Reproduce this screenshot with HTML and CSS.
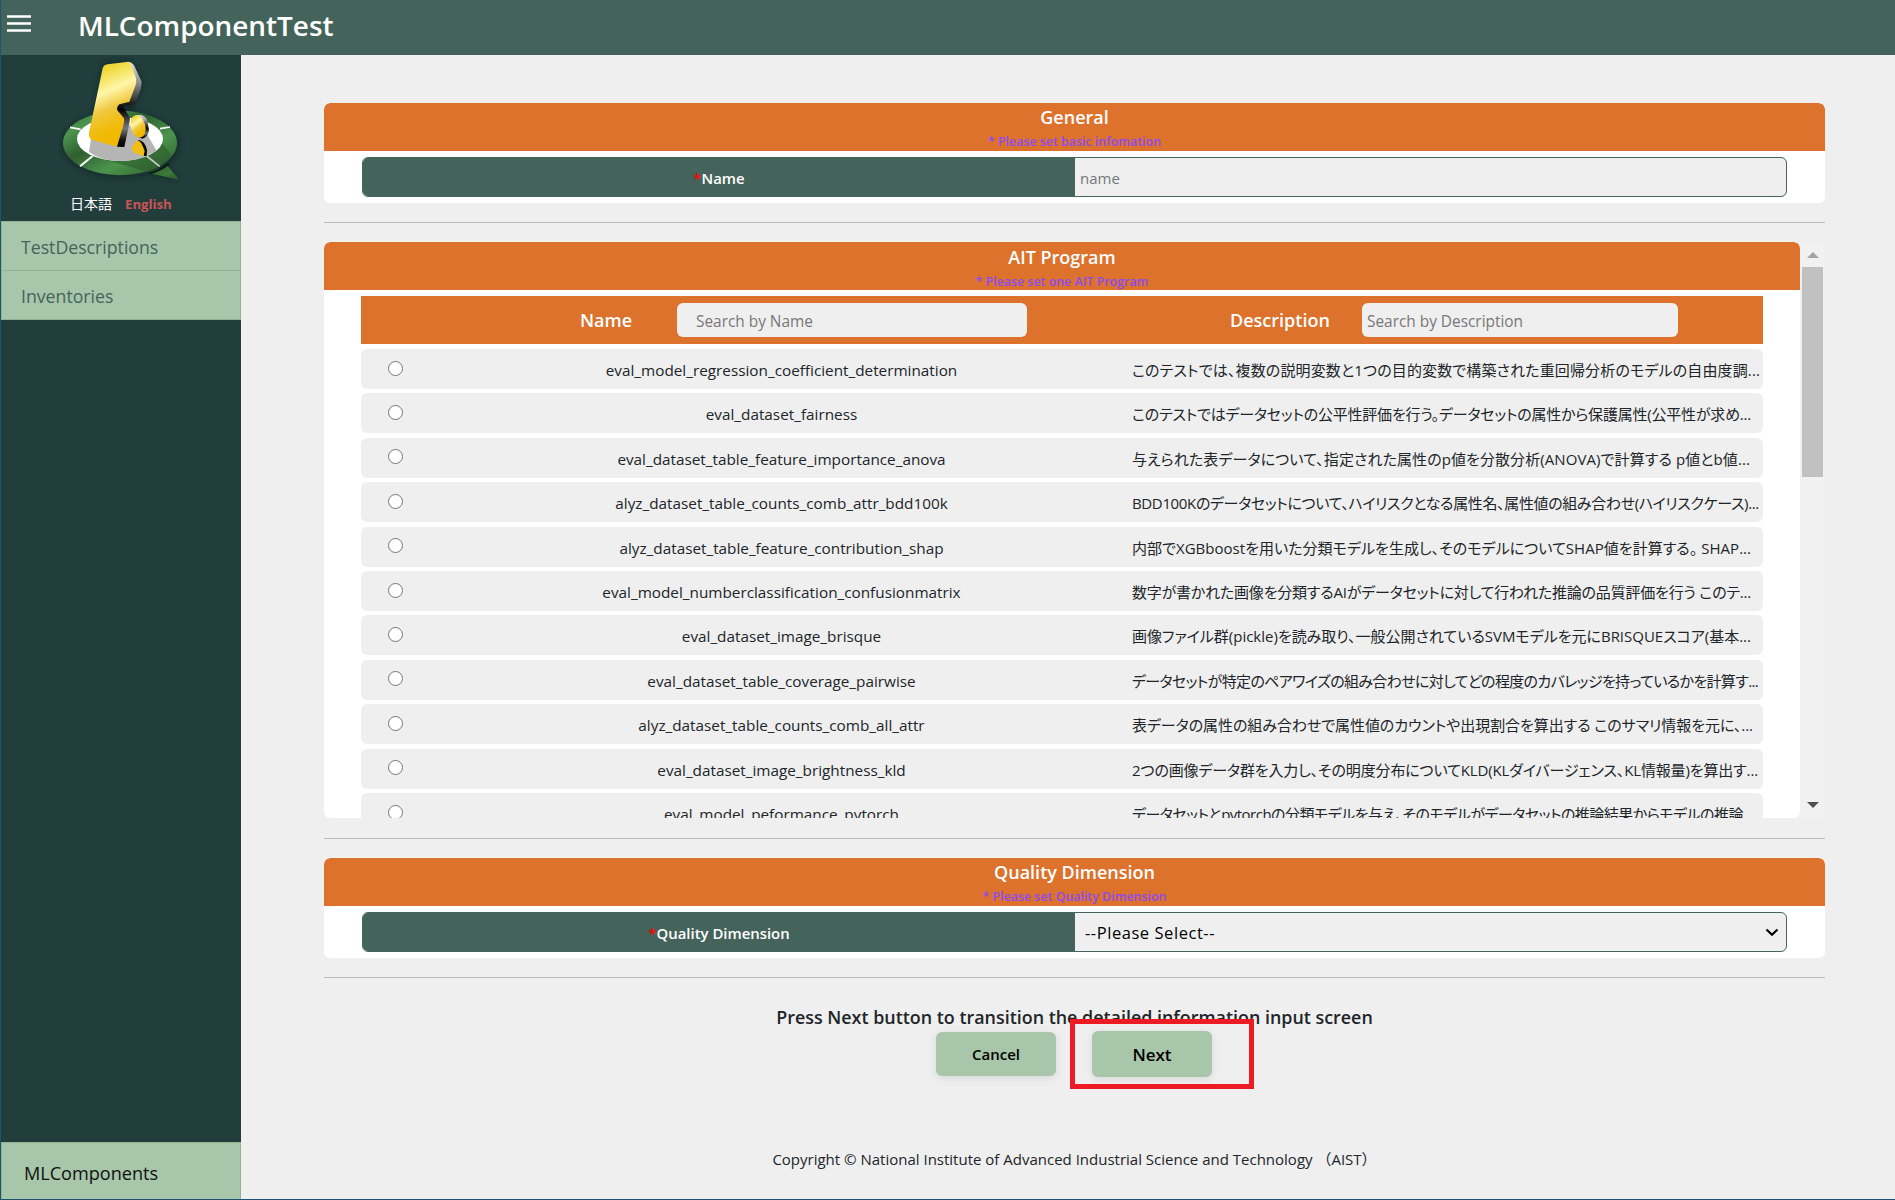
FILE: index.html
```
<!DOCTYPE html>
<html lang="en">
<head>
<meta charset="utf-8">
<title>MLComponentTest</title>
<link rel="stylesheet" href="styles.css">
</head>
<body>
<div class="app">
  <header class="topbar">
    <svg class="burger" width="24" height="18" viewBox="0 0 24 18"><path d="M0 1.5h24M0 8.5h24M0 15.5h24" stroke="#fff" stroke-width="2.6"/></svg>
    <h1>MLComponentTest</h1>
  </header>
  <div class="body">
    <aside class="sidebar">
      <svg class="logo" width="128" height="130" viewBox="24 15 384 390">
        <defs>
          <linearGradient id="gold" x1="0" y1="0" x2="0.25" y2="1"><stop offset="0" stop-color="#ecd02c"/><stop offset=".18" stop-color="#f0d93c"/><stop offset=".42" stop-color="#fff6a8"/><stop offset=".62" stop-color="#f0c840"/><stop offset=".85" stop-color="#f2bb08"/><stop offset="1" stop-color="#f0b800"/></linearGradient>
          <linearGradient id="edge" x1="0" y1="0" x2="0" y2="1"><stop offset="0" stop-color="#e4e4e4"/><stop offset=".25" stop-color="#8c8c8c"/><stop offset=".45" stop-color="#333"/><stop offset=".56" stop-color="#000"/><stop offset=".78" stop-color="#777"/><stop offset=".92" stop-color="#111"/><stop offset="1" stop-color="#000"/></linearGradient>
          <linearGradient id="ring" x1="0" y1="0" x2="1" y2="1"><stop offset="0" stop-color="#2c6a34"/><stop offset=".2" stop-color="#4e944f"/><stop offset=".4" stop-color="#2f5f30"/><stop offset=".65" stop-color="#4b944c"/><stop offset="1" stop-color="#2b5429"/></linearGradient>
          <linearGradient id="tail" x1="0" y1="0" x2="1" y2="1"><stop offset="0" stop-color="#2d5a2c"/><stop offset=".6" stop-color="#3c7a3a"/><stop offset="1" stop-color="#2a5228"/></linearGradient>
          <filter id="soft" x="-20%" y="-20%" width="140%" height="140%"><feGaussianBlur stdDeviation="9"/></filter>
        </defs>
        <g filter="url(#soft)" fill="#0c1d1c" opacity=".6"><ellipse cx="212" cy="284" rx="174" ry="98"/><path d="M162 40L240 32 278 100 250 180 170 280 115 270Z"/><path d="M300 370L345 340 388 392Z"/></g>
        <ellipse cx="210" cy="279" rx="171" ry="97" fill="url(#ring)"/>
        <path d="M120 315L310 371 366 318 328 268Z" fill="#2b592b" opacity=".55"/>
        <ellipse cx="210" cy="267" rx="129" ry="66" fill="#fff"/>
        <path d="M123 268L117 306Q155 333 210 333 270 333 320 302L280 235 200 220Z" fill="#b5b5b5"/>
        <path d="M60 232L92 238M330 236L360 231" stroke="#fff" stroke-width="5"/>
        <path d="M128 318L90 349" stroke="#fff" stroke-width="6"/><path d="M290 318L329 349" stroke="#ccc" stroke-width="5"/>
        <path d="M298 370Q330 362 350 344L388 389Z" fill="url(#tail)"/>
        <path d="M298 370Q335 362 356 341" fill="none" stroke="#0b1714" stroke-width="5"/>
        <path d="M232 35Q246 36 252 46L275 95 273 115 256 162 222 167 220 172 240 204 238 220 223 291 201 290 180 100Z" fill="url(#edge)"/>
        <path d="M173 43L230 36Q240 36 244 45L258 85Q260 100 256 108L238 155 208 163Q199 171 202 181L222 205Q224 213 221 222L201 290 126 269Q115 264 117 248L158 55Q161 45 173 43Z" fill="url(#gold)"/>
        <path d="M256 196Q284 190 292 212L297 240Q293 264 276 266L255 255Z" fill="url(#edge)"/>
        <ellipse cx="264" cy="229" rx="22" ry="34" transform="rotate(-15 264 229)" fill="url(#gold)"/>
        <path d="M264 270Q285 272 291 300L290 318 281 318Z" fill="#080808"/>
        <path d="M256 275Q267 267 275 281L284 302 281 318 254 309Q244 302 246 291Z" fill="#f2be14"/>
      </svg>
      <div class="lang"><span class="ja">日本語</span><span class="en">English</span></div>
      <nav class="menu"><a>TestDescriptions</a><a>Inventories</a></nav>
      <a class="bottom-link">MLComponents</a>
    </aside>
    <main class="content">
      <section class="card">
        <div class="card-head"><h2>General</h2><p>* Please set basic infomation</p></div>
        <div class="field"><label><i>*</i>Name</label><div class="control placeholder">name</div></div>
      </section>
      <hr>
      <section class="program">
        <div class="program-list">
          <div class="card-head"><h2>AIT Program</h2><p>* Please set one AIT Program</p></div>
          <div class="table-head">
            <b class="col-name">Name</b><div class="search by-name">Search by Name</div>
            <b class="col-desc">Description</b><div class="search by-desc">Search by Description</div>
          </div>
          <div class="rows">
            <div class="row"><span class="radio"></span><span class="name">eval_model_regression_coefficient_determination</span><span class="desc" style="letter-spacing:.135px">このテストでは、複数の説明変数と1つの目的変数で構築された重回帰分析のモデルの自由度調...</span></div>
            <div class="row"><span class="radio"></span><span class="name">eval_dataset_fairness</span><span class="desc" style="letter-spacing:-.215px">このテストではデータセットの公平性評価を行う。データセットの属性から保護属性(公平性が求め...</span></div>
            <div class="row"><span class="radio"></span><span class="name">eval_dataset_table_feature_importance_anova</span><span class="desc" style="letter-spacing:.086px">与えられた表データについて、指定された属性のp値を分散分析(ANOVA)で計算する p値とb値...</span></div>
            <div class="row"><span class="radio"></span><span class="name">alyz_dataset_table_counts_comb_attr_bdd100k</span><span class="desc" style="letter-spacing:-.353px">BDD100Kのデータセットについて、ハイリスクとなる属性名、属性値の組み合わせ(ハイリスクケース)...</span></div>
            <div class="row"><span class="radio"></span><span class="name">alyz_dataset_table_feature_contribution_shap</span><span class="desc" style="letter-spacing:.028px">内部でXGBboostを用いた分類モデルを生成し、そのモデルについてSHAP値を計算する。 SHAP...</span></div>
            <div class="row"><span class="radio"></span><span class="name">eval_model_numberclassification_confusionmatrix</span><span class="desc" style="letter-spacing:-.208px">数字が書かれた画像を分類するAIがデータセットに対して行われた推論の品質評価を行う このテ...</span></div>
            <div class="row"><span class="radio"></span><span class="name">eval_dataset_image_brisque</span><span class="desc" style="letter-spacing:-.015px">画像ファイル群(pickle)を読み取り、一般公開されているSVMモデルを元にBRISQUEスコア(基本...</span></div>
            <div class="row"><span class="radio"></span><span class="name">eval_dataset_table_coverage_pairwise</span><span class="desc" style="letter-spacing:-.65px">データセットが特定のペアワイズの組み合わせに対してどの程度のカバレッジを持っているかを計算す...</span></div>
            <div class="row"><span class="radio"></span><span class="name">alyz_dataset_table_counts_comb_all_attr</span><span class="desc" style="letter-spacing:-.064px">表データの属性の組み合わせで属性値のカウントや出現割合を算出する このサマリ情報を元に、...</span></div>
            <div class="row"><span class="radio"></span><span class="name">eval_dataset_image_brightness_kld</span><span class="desc" style="letter-spacing:-.142px">2つの画像データ群を入力し、その明度分布についてKLD(KLダイバージェンス、KL情報量)を算出す...</span></div>
            <div class="row"><span class="radio"></span><span class="name">eval_model_peformance_pytorch</span><span class="desc" style="letter-spacing:-.52px">データセットとpytorchの分類モデルを与え、そのモデルがデータセットの推論結果からモデルの推論...</span></div>
          </div>
        </div>
        <div class="scrollbar"><span class="arrow up"></span><span class="thumb"></span><span class="arrow down"></span></div>
      </section>
      <hr class="low">
      <section class="card">
        <div class="card-head"><h2>Quality Dimension</h2><p>* Please set Quality Dimension</p></div>
        <div class="field"><label><i>*</i>Quality Dimension</label><div class="control select"><span>--Please Select--</span><svg width="14" height="9" viewBox="0 0 14 9"><path d="M1.5 1.5L7 6.7l5.500-5.200" fill="none" stroke="#000" stroke-width="2.2"/></svg></div></div>
      </section>
      <hr>
      <p class="hint">Press Next button to transition the detailed information input screen</p>
      <div class="actions">
        <button class="cancel">Cancel</button>
        <div class="next-wrap"><button class="next">Next</button><span class="marker"></span></div>
      </div>
      <footer>Copyright © National Institute of Advanced Industrial Science and Technology （AIST）</footer>
    </main>
  </div>
</div>
</body>
</html>
```
FILE: styles.css
```
* { box-sizing: border-box; }
body { margin: 0; background: #efefef; color: #212529; font: 15px/20px "Open Sans", "Noto Sans CJK JP", sans-serif; }
h1, h2, p { margin: 0; }
.app { display: flex; flex-direction: column; height: 1200px; border-left: 1px solid #1f5372; border-bottom: 1px solid #1f5372; overflow: hidden; }
.topbar { flex: none; height: 55px; display: flex; align-items: center; background: #44645b; color: #fff; padding-left: 6px; }
.burger { margin-top: -7px; }
.topbar h1 { margin-left: 47px; padding-bottom: 6px; font-size: 27.9px; line-height: 36px; font-weight: 600; }
.body { flex: 1; display: flex; min-height: 0; }

.sidebar { flex: none; width: 240px; display: flex; flex-direction: column; background: #213e3d; }
.logo { margin-left: 57px; flex: none; }
.lang { display: flex; align-items: center; margin: 9px 0 7px 69px; height: 20px; gap: 13px; }
.ja { color: #fff; font-size: 14px; }
.en { color: #cb5455; font-size: 13.2px; font-weight: 700; }
.menu { display: flex; flex-direction: column; border: 1px solid #93b193; }
.menu a { height: 48px; padding: 0 19px; font-size: 17.7px; line-height: 50px; color: #44645b; background: #a8c6aa; }
.menu a + a { height: 49px; border-top: 1px solid #93b193; }
.bottom-link { margin-top: auto; height: 57px; padding-left: 22px; border: 1px solid #93b193; border-bottom: 0; background: #a8c6aa; color: #111; font-size: 18.1px; line-height: 61px; }

.content { flex: 1; padding: 48px 70px 0 83px; background: #efefef; display: flex; flex-direction: column; }
.card { height: 100px; background: #fff; border-radius: 6px; overflow: hidden; flex: none; }
.card-head { height: 48px; background: #dc722b; text-align: center; border-radius: 6px 6px 0 0; overflow: hidden; }
.card-head h2 { color: #fff; font-size: 18px; font-weight: 600; line-height: 29px; }
.card-head p { color: #8c4bf0; font-size: 12.4px; font-weight: 600; line-height: 20px; }
.field { display: flex; height: 40px; margin: 6px 38px 0; border: 1px solid #44645b; border-radius: 6px; overflow: hidden; background: #efefef; }
.field label { width: 712px; background: #44645b; color: #fff; font-weight: 600; line-height: 41px; text-align: center; font-size: 14.9px; }
.field i { color: #f00; font-style: normal; }
.control { flex: 1; padding: 0 5px; line-height: 41px; }
.placeholder { color: #777; }
.select { display: flex; align-items: center; justify-content: space-between; padding: 0 7px 0 10px; color: #000; font-size: 16.5px; letter-spacing: .55px; line-height: 39px; }
hr { width: 100%; height: 1px; flex: none; margin: 19px 0; border: 0; background: #bbb; }
hr.low { margin-top: 20px; }

.program { display: flex; height: 576px; flex: none; }
.program-list { width: 1476px; background: #fff; border-radius: 6px; overflow: hidden; }
.program .card-head h2 { line-height: 31px; }
.program .card-head p { line-height: 18px; }
.table-head { display: flex; align-items: center; width: 1402px; height: 48px; margin: 6px 37px 5px; background: #dc722b; }
.table-head b { font-size: 18px; font-weight: 600; color: #fff; }
.col-name { margin-left: 219px; width: 97px; }
.col-desc { margin-left: 203px; width: 132px; }
.search { height: 34px; line-height: 37px; font-size: 15.4px; color: #777; background: #efefef; border-radius: 6px; }
.by-name { width: 350px; padding-left: 19px; }
.by-desc { width: 316px; padding-left: 5px; }
.rows { display: flex; flex-direction: column; gap: 4.4px; margin: 0 37px; width: 1402px; }
.row { flex: none; display: flex; height: 40px; line-height: 43px; background: #efefef; border-radius: 6px; white-space: nowrap; }
.radio { width: 15px; height: 15px; margin: 11.6px 0 0 27px; border: 1px solid #767676; border-radius: 50%; background: #fff; }
.name { width: 730px; margin-right: -1px; padding-left: 27px; text-align: center; font-size: 15.3px; }
.desc { font-feature-settings: "palt"; }
.scrollbar { width: 25px; display: flex; flex-direction: column; align-items: center; background: #f1f1f1; padding: 10px 0 10px; }
.arrow { border: 6px solid transparent; border-top-width: 0; }
.up { border-bottom: 6px solid #a3a3a3; }
.down { border-top: 6px solid #505050; border-bottom: 0; margin-top: auto; }
.thumb { width: 21px; height: 210px; margin-top: 9px; background: #c1c1c1; }

.hint { margin-top: 8px; text-align: center; font-size: 17.9px; font-weight: 600; line-height: 24px; height: 24px; white-space: nowrap; }
.actions { display: flex; justify-content: center; align-items: center; gap: 36px; height: 46px; margin-top: 2px; padding-right: 1px; }
button { width: 120px; padding: 0; border: 0; border-radius: 6px; background: #a8c6aa; color: #000; font-family: inherit; font-weight: 600; box-shadow: 0 2px 8px #0000001a; }
.cancel { height: 44px; font-size: 15px; }
.next { height: 46px; font-size: 17px; }
.next-wrap { position: relative; }
.marker { position: absolute; left: -22px; top: -12px; width: 184px; height: 70px; border: 5px solid #ed1c24; }
footer { margin-top: 72px; text-align: center; font-size: 15px; }
```
